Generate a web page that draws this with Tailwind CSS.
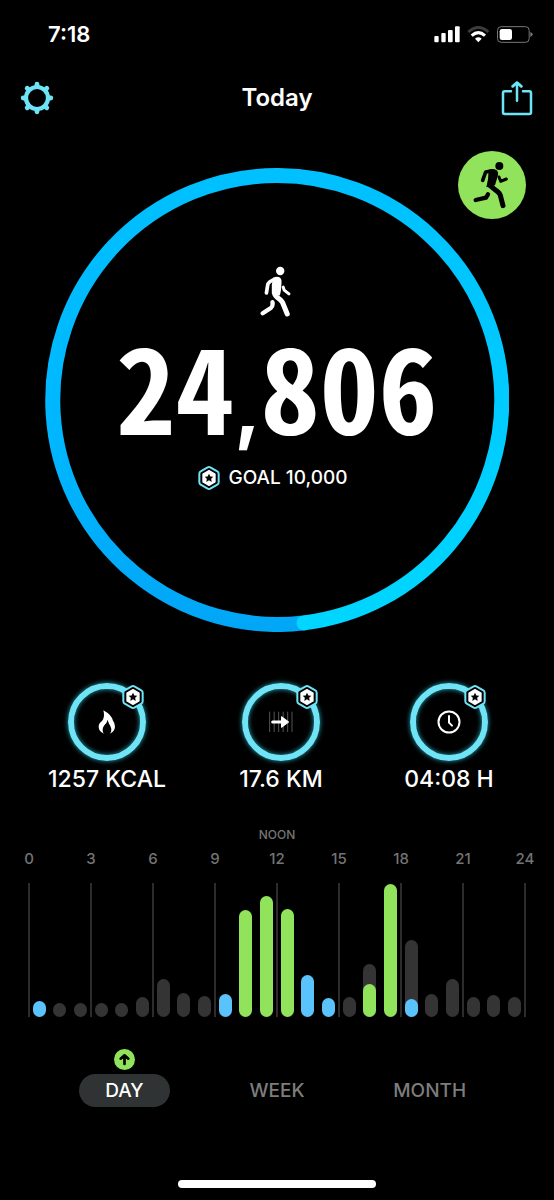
<!DOCTYPE html>
<html lang="en">
<head>
<meta charset="utf-8">
<meta name="viewport" content="width=device-width, initial-scale=1">
<title>Today</title>
<script src="https://cdn.jsdelivr.net/npm/@tailwindcss/browser@4"></script>
</head>
<body class="bg-black text-white font-['Inter',sans-serif]">
<svg class="hidden" aria-hidden="true">
  <symbol id="goal-badge" viewBox="0 0 66 72">
    <path d="M33 3 Q35 3 37 4 L58 16 Q62 18 62 23 V49 Q62 54 58 56 L37 68 Q33 70 29 68 L8 56 Q4 54 4 49 V23 Q4 18 8 16 L29 4 Q31 3 33 3Z" fill="#000" stroke="#6fe4f7" stroke-width="6"/>
    <path d="M33 14 L51 24 V48 L33 58 L15 48 V24Z" fill="#fff" stroke="#fff" stroke-width="4" stroke-linejoin="round"/>
    <path d="M33 23 L37 31.500 L46 32.500 L39.500 38.500 L41 48 L33 43 L25 48 L26.500 38.500 L20 32.500 L29 31.500Z" fill="#000"/>
  </symbol>
</svg>
<div class="flex min-h-screen flex-col">
  <div class="flex h-[68px] items-center justify-between pl-12 pr-[21px]">
    <span class="text-[22px] font-semibold leading-6">7:18</span>
    <div class="flex items-center gap-[7px]">
      <svg class="h-[17px] w-[26px]" viewBox="102 47 78 51" fill="#fff" aria-label="Signal"><rect x="103" y="77" width="13" height="19" rx="3"/><rect x="124" y="68" width="13" height="28" rx="3"/><rect x="144" y="59" width="14" height="37" rx="3"/><rect x="165" y="48" width="14" height="48" rx="3"/></svg>
      <svg class="h-[17px] w-[23px]" viewBox="200 47 69 51" fill="none" aria-label="Wi-Fi"><path d="M204 65 Q234 38 264 65" stroke="#3c3c3c" stroke-width="9"/><path d="M214 76 Q234 58 254 76" stroke="#fff" stroke-width="9"/><path d="M224 85 Q234 77 244 85 L234 96Z" fill="#fff"/></svg>
      <svg class="h-[17px] w-9" viewBox="291 47 108 51" aria-label="Battery"><rect x="292.500" y="49" width="95" height="47" rx="11" fill="none" stroke="#777" stroke-width="3"/><rect x="299" y="56" width="37" height="33" rx="7" fill="#fff"/><path d="M391 65 Q398 67 398 72 Q398 77 391 80Z" fill="#777"/></svg>
    </div>
  </div>
  <header class="flex h-[60px] items-center justify-between px-5">
    <button type="button" aria-label="Settings" class="size-[34px]">
      <svg viewBox="0 0 34 34" fill="none" stroke="#6fe4f7" stroke-linecap="round"><circle cx="17" cy="17" r="11" stroke-width="4.200"/><path stroke-width="4.800" d="M17 4.500V3.200M17 29.500V30.800M4.500 17H3.200M29.500 17H30.800M8 8L7.200 7.200M26 8L26.800 7.200M8 26L7.200 26.800M26 26L26.800 26.800"/></svg>
    </button>
    <h1 class="text-2xl font-semibold">Today</h1>
    <button type="button" aria-label="Share" class="h-[35px] w-[34px]">
      <svg class="h-full w-full" viewBox="300 209 102 105" fill="none" stroke="#6fe4f7" stroke-width="7.500" stroke-linecap="round" stroke-linejoin="round"><path d="M333 240H314Q309 240 309 245V303Q309 308 314 308H388Q393 308 393 303V245Q393 240 388 240H369M351 268V215"/><path stroke-width="8.500" d="M338 225L351 214L364 225"/></svg>
    </button>
  </header>
  <main class="flex flex-1 flex-col">
    <section class="relative mt-10 px-[45px]">
      <div class="grid place-items-center">
        <svg class="col-start-1 row-start-1 w-full" viewBox="0 0 464 464" fill="none" stroke-width="15" aria-hidden="true">
          <defs>
            <linearGradient id="ring-left" x1="0" y1="0" x2="0" y2="1"><stop offset="0" stop-color="#00c0ff"/><stop offset=".6" stop-color="#00b6ff"/><stop offset="1" stop-color="#02a6f6"/></linearGradient>
            <linearGradient id="ring-right" x1="0" y1="0" x2="0" y2="1"><stop offset="0" stop-color="#00c0ff"/><stop offset="1" stop-color="#00d6ff"/></linearGradient>
          </defs>
          <path d="M232 7.500A224.500 224.500 0 1 0 259 454.900" stroke="url(#ring-left)"/>
          <path d="M231 7.500A224.500 224.500 0 0 1 259 454.900" stroke="url(#ring-right)"/>
          <circle cx="259" cy="454.900" r="7.500" fill="#00d6ff"/>
        </svg>
        <div class="col-start-1 row-start-1 flex flex-col items-center pb-11">
          <svg class="mr-1 h-[51px] w-[31px]" viewBox="478 36 92 152" fill="none" stroke="#fff" stroke-linecap="round" stroke-linejoin="round" aria-label="Walking">
            <circle cx="538" cy="51" r="12.500" fill="#fff" stroke="none"/>
            <path d="M520 76Q504 83 501 91L497 116" stroke-width="11"/>
            <path d="M517 71Q529 65 538 71Q543 76 542 86L540 110Q539 116 537 124L513 118L513 92Z" fill="#fff" stroke="none"/>
            <path d="M521 117Q523 126 535 134Q541 138 545 145L559 179" stroke-width="15"/>
            <path d="M515 144Q517 156 510 161L486 177" stroke-width="13"/>
            <path d="M547 99L550 108L564 119" stroke-width="9"/>
          </svg>
          <p class="mt-2 font-['Noto_Sans_CJK_JP','Roboto',sans-serif] text-[118px] font-bold leading-[118px]"><span class="[font-feature-settings:'hwid']">24</span><span class="font-['Inter',sans-serif] text-[80px] leading-none">,</span><span class="[font-feature-settings:'hwid']">806</span></p>
          <p class="mr-2 mt-5 flex items-center gap-2 text-[19px] font-medium leading-6"><svg class="h-6 w-[22px]" aria-hidden="true"><use href="#goal-badge"/></svg>GOAL 10,000</p>
        </div>
      </div>
      <button type="button" aria-label="Workouts" class="absolute -top-[17px] right-7 size-[68px]">
        <svg viewBox="54 47 204 204" fill="none" stroke="#000" stroke-linecap="round" stroke-linejoin="round">
          <circle cx="156" cy="149" r="102" fill="#90e35a" stroke="none"/>
          <circle cx="178" cy="92" r="12" fill="#000" stroke="none"/>
          <path d="M154 107L137 110L128 135" stroke-width="11"/>
          <path d="M146 103Q160 98 170 105Q177 111 173 123L165 150L139 156L144 132Z" fill="#000" stroke="none"/>
          <path d="M149 150L174 170Q179 174 181 180L189 211" stroke-width="15"/>
          <path d="M144 177L138 187L107 194" stroke-width="13"/>
          <path d="M177 125L182 138L199 131" stroke-width="9"/>
        </svg>
      </button>
    </section>

    <section class="mt-[51px] grid grid-cols-[29fr_29fr_27fr] pl-5 pr-6 text-center text-[23px] font-medium leading-7">
      <div>
        <div class="relative mx-auto grid size-[78px] place-items-center rounded-full border-[6px] border-[#6fe4f7] shadow-[0_0_5px_#2aa5b8,inset_0_0_5px_#2aa5b8]">
          <svg class="h-6 w-[18px]" viewBox="178 121 54 72" fill="#fff" aria-hidden="true"><path d="M194 122Q218 135 223 153Q229 160 229 171Q228 186 213 192Q219 187 218 178Q217 170 211 162Q208 154 207 150Q205 160 197 167Q190 176 192 184Q193 190 197 192Q180 186 180 171Q180 161 190 154Q200 142 194 122Z"/></svg>
          <svg class="absolute -right-1 -top-1 h-6 w-[22px]" aria-hidden="true"><use href="#goal-badge"/></svg>
        </div>
        <p class="mt-1">1257 KCAL</p>
      </div>
      <div>
        <div class="relative mx-auto grid size-[78px] place-items-center rounded-full border-[6px] border-[#6fe4f7] shadow-[0_0_5px_#2aa5b8,inset_0_0_5px_#2aa5b8]">
          <svg class="h-[22px] w-[26px]" viewBox="144 125 78 66" aria-hidden="true"><path d="M149 127V188M162.500 127V188M176 127V188M189.500 127V188M203 127V188M216 127V188" stroke="#555" stroke-width="3"/><path d="M158 158H186" stroke="#fff" stroke-width="9" stroke-linecap="round"/><path d="M185 143L205 158L185 173Z" fill="#fff" stroke="#fff" stroke-width="4" stroke-linejoin="round"/></svg>
          <svg class="absolute -right-1 -top-1 h-6 w-[22px]" aria-hidden="true"><use href="#goal-badge"/></svg>
        </div>
        <p class="mt-1">17.6 KM</p>
      </div>
      <div>
        <div class="relative mx-auto grid size-[78px] place-items-center rounded-full border-[6px] border-[#6fe4f7] shadow-[0_0_5px_#2aa5b8,inset_0_0_5px_#2aa5b8]">
          <svg class="size-6" viewBox="0 0 72 72" fill="none" stroke="#fff" stroke-width="6" stroke-linecap="round" stroke-linejoin="round" aria-hidden="true"><circle cx="36" cy="36" r="31.500"/><path d="M36 18V38L45 47"/></svg>
          <svg class="absolute -right-1 -top-1 h-6 w-[22px]" aria-hidden="true"><use href="#goal-badge"/></svg>
        </div>
        <p class="mt-1">04:08 H</p>
      </div>
    </section>

    <section class="mt-[30px] px-[29px] text-[#747474]" aria-label="Steps by hour">
      <p class="text-center text-xs font-medium leading-6">NOON</p>
      <div class="flex justify-between text-[15px] font-medium leading-6">
        <span class="flex w-0 justify-center">0</span><span class="flex w-0 justify-center">3</span><span class="flex w-0 justify-center">6</span><span class="flex w-0 justify-center">9</span><span class="flex w-0 justify-center">12</span><span class="flex w-0 justify-center">15</span><span class="flex w-0 justify-center">18</span><span class="flex w-0 justify-center">21</span><span class="flex w-0 justify-center">24</span>
      </div>
      <div class="mt-3 grid">
        <div class="col-start-1 row-start-1 -mx-px flex h-[134px] justify-between">
          <i class="w-0.5 bg-[#2c2c2c]"></i><i class="w-0.5 bg-[#2c2c2c]"></i><i class="w-0.5 bg-[#2c2c2c]"></i><i class="w-0.5 bg-[#2c2c2c]"></i><i class="w-0.5 bg-[#2c2c2c]"></i><i class="w-0.5 bg-[#2c2c2c]"></i><i class="w-0.5 bg-[#2c2c2c]"></i><i class="w-0.5 bg-[#2c2c2c]"></i><i class="w-0.5 bg-[#2c2c2c]"></i>
        </div>
        <div id="bars" class="col-start-1 row-start-1 grid grid-cols-24 items-end justify-items-center"></div>
      </div>
    </section>

    <nav class="mt-8 grid grid-cols-3 px-12 text-[19px] font-medium leading-[33px] text-[#7d7d7d]">
      <div class="flex flex-col items-center">
        <svg class="mb-1 size-[21px]" viewBox="0 0 63 63" fill="none" stroke="#000" stroke-width="8" stroke-linecap="round" stroke-linejoin="round" aria-hidden="true"><circle cx="31.500" cy="31.500" r="31.500" fill="#90e35a" stroke="none"/><path d="M31.500 45V20M20 29L31.500 19L43 29"/></svg>
        <button type="button" aria-pressed="true" class="w-[91px] rounded-full bg-[#303334] text-white">DAY</button>
      </div>
      <button type="button" class="mt-[25px]">WEEK</button>
      <button type="button" class="mt-[25px]">MONTH</button>
    </nav>
    <div class="mx-auto mb-3 mt-auto h-2 w-[198px] rounded-full bg-white"></div>
  </main>
</div>
<script>
  // Each hour: [typical steps height, today's height, today's colour]
  const blue = 'bg-[#5bc3fb]', green = 'bg-[#90e35a]';
  const hours = [
    [0, 16, blue], [14], [14], [14], [14], [20], [38], [24], [21], [0, 23, blue],
    [0, 107, green], [0, 121, green], [0, 108, green], [0, 42, blue], [0, 19, blue], [20],
    [53, 33, green], [0, 133, green], [77, 18, blue], [23], [38], [20], [22], [20]
  ];
  document.getElementById('bars').innerHTML = hours.map(([base, today, color]) => {
    const now = today ? `<div class="w-full rounded-full ${color}" style="height:${today}px"></div>` : '';
    const track = base ? 'bg-[#343434]' : '';
    return `<div class="flex w-[13px] items-end rounded-full ${track}" style="height:${Math.max(base, today || 0)}px">${now}</div>`;
  }).join('');
</script>
</body>
</html>
